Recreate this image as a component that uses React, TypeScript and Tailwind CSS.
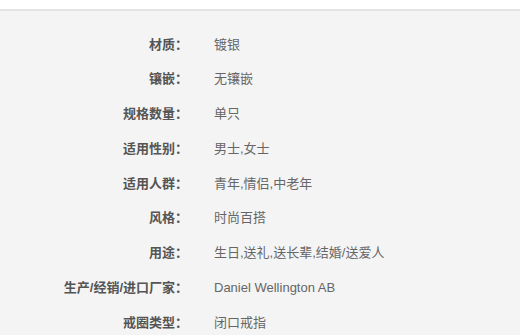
const rows: [string, string][] = [
  ["材质：", "镀银"],
  ["镶嵌：", "无镶嵌"],
  ["规格数量：", "单只"],
  ["适用性别：", "男士,女士"],
  ["适用人群：", "青年,情侣,中老年"],
  ["风格：", "时尚百搭"],
  ["用途：", "生日,送礼,送长辈,结婚/送爱人"],
  ["生产/经销/进口厂家：", "Daniel Wellington AB"],
  ["戒圈类型：", "闭口戒指"],
];

export default function App() {
  return (
    <div
      className="w-[520px] h-[335px] overflow-hidden bg-white"
      style={{ fontFamily: '"Liberation Sans", Arial, "Noto Sans CJK SC", sans-serif' }}
    >
      <div className="h-[9px] bg-white" />
      <div className="h-[326px] border-t-2 border-[#e4e4e4] bg-[#f4f4f4] pt-[16px]">
        {rows.map(([label, value]) => (
          <div key={label} className="flex h-[34.75px] items-center text-[13px]">
            <div className="w-[188px] shrink-0 text-right font-bold text-[#555]">{label}</div>
            <div className="pl-[26px] text-[#666]">{value}</div>
          </div>
        ))}
      </div>
    </div>
  );
}
